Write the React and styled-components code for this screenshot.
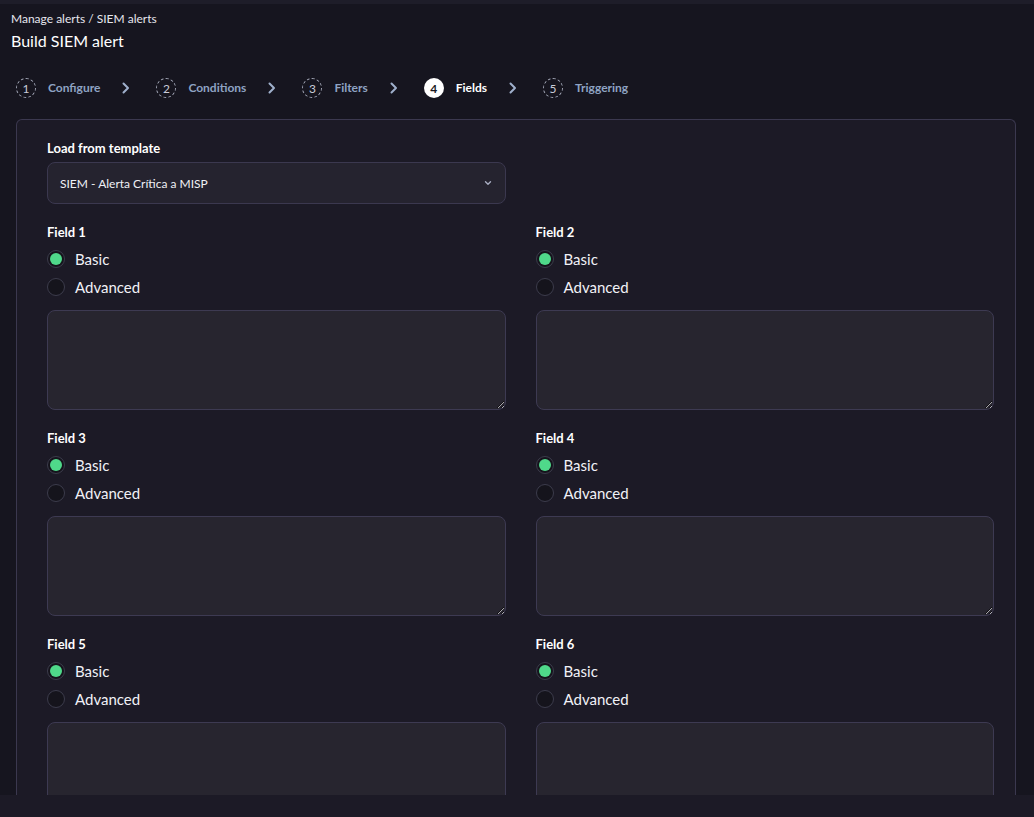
import React from "react";
import styled, { createGlobalStyle } from "styled-components";

const Global = createGlobalStyle`
  html, body { margin: 0; padding: 0; background: #16151f; }
  body { font-family: Lato, "Noto Sans", sans-serif; color: #ececf2; }
  * { box-sizing: border-box; }
`;

const Root = styled.div`
  height: 100vh;
  display: flex;
  flex-direction: column;
  overflow: hidden;
  background: #16151f;
`;

const TopStrip = styled.div`
  height: 4px;
  flex: none;
  background: #1e1d29;
`;

const Main = styled.main`
  flex: 1;
  min-height: 0;
  overflow: hidden;
  display: flex;
  flex-direction: column;
`;

const Footer = styled.footer`
  height: 22px;
  flex: none;
  background: #1c1a26;
`;

const Header = styled.header`
  padding: 7px 11px 0;
  display: flex;
  flex-direction: column;
  gap: 4px;
`;

const Crumb = styled.div`
  font-size: 12px;
  line-height: 16px;
  color: #e6e6ee;
`;

const Title = styled.h1`
  margin: 0;
  font-size: 16px;
  line-height: 20px;
  font-weight: 400;
  color: #ffffff;
`;

const Stepper = styled.nav`
  display: flex;
  align-items: center;
  padding: 0 16px;
  margin-top: 27px;
  height: 20px;
`;

const Step = styled.div`
  display: flex;
  align-items: center;
  gap: 12px;
`;

const StepCircle = styled.span`
  width: 20px;
  height: 20px;
  border-radius: 50%;
  display: inline-flex;
  align-items: center;
  justify-content: center;
  font-size: 12px;
  font-weight: ${(p) => (p.$active ? 700 : 400)};
  color: ${(p) => (p.$active ? "#1a1924" : "#c9ccd8")};
  background: ${(p) => (p.$active ? "#ffffff" : "transparent")};
  border: ${(p) => (p.$active ? "none" : "1px dashed #a7abbb")};
`;

const StepLabel = styled.span`
  font-size: 12px;
  line-height: 14px;
  margin-top: -1px;
  font-weight: 700;
  color: ${(p) => (p.$active ? "#ffffff" : "#8fa3c3")};
`;

const Chevron = styled.svg`
  width: 16px;
  height: 16px;
  margin: 0 22px 0 18px;
  flex: none;
`;

const Panel = styled.section`
  margin: 21px 18px 0 16px;
  border: 1px solid #3b384f;
  border-bottom: none;
  border-radius: 6px 6px 0 0;
  background: #1c1a26;
  padding: 20px 21px 0 30px;
  flex: 1;
`;

const Grid = styled.div`
  display: grid;
  grid-template-columns: 1fr 1fr;
  column-gap: 30px;
  row-gap: 20px;
`;

const FieldGroup = styled.div`
  display: flex;
  flex-direction: column;
`;

const Label = styled.label`
  font-size: 13px;
  line-height: 16px;
  font-weight: 700;
  color: #ffffff;
  margin-bottom: ${(p) => p.$gap || 6}px;
`;

const SelectBox = styled.div`
  height: 42px;
  border: 1px solid #3b384f;
  border-radius: 8px;
  background: #25232f;
  display: flex;
  align-items: center;
  justify-content: space-between;
  padding: 0 12px 0 12px;
  font-size: 12px;
  color: #f0f0f5;
`;

const RadioRow = styled.label`
  display: flex;
  align-items: center;
  gap: 10px;
  height: 28px;
  font-size: 15px;
  color: #f1f1f6;
`;

const RadioDot = styled.span`
  width: 18px;
  height: 18px;
  border-radius: 50%;
  border: 1px solid #3c3c4c;
  background: #15141c;
  display: inline-flex;
  align-items: center;
  justify-content: center;
  &::after {
    content: "";
    width: 12px;
    height: 12px;
    border-radius: 50%;
    background: ${(p) => (p.$checked ? "#4fd98a" : "transparent")};
  }
`;

const TextArea = styled.textarea`
  margin-top: 9px;
  height: 100px;
  width: 100%;
  resize: vertical;
  border: 1px solid #3d3a52;
  border-radius: 8px;
  background: #27252f;
  color: #f0f0f5;
  font-family: inherit;
  font-size: 13px;
  padding: 8px 10px;
  outline: none;
`;

const steps = ["Configure", "Conditions", "Filters", "Fields", "Triggering"];

function ChevronIcon() {
  return (
    <Chevron viewBox="0 0 16 16" fill="none">
      <path d="M5.5 3.5 L10 8 L5.5 12.5" stroke="#9fb0cc" strokeWidth="2" strokeLinecap="round" strokeLinejoin="round" />
    </Chevron>
  );
}

function Field({ n }) {
  return (
    <FieldGroup>
      <Label $gap={5}>Field {n}</Label>
      <RadioRow>
        <RadioDot $checked />
        Basic
      </RadioRow>
      <RadioRow>
        <RadioDot />
        Advanced
      </RadioRow>
      <TextArea />
    </FieldGroup>
  );
}

export default function App() {
  return (
    <Root>
      <Global />
      <TopStrip />
      <Main>
        <Header>
          <Crumb>Manage alerts / SIEM alerts</Crumb>
          <Title>Build SIEM alert</Title>
        </Header>
        <Stepper>
          {steps.map((s, i) => (
            <React.Fragment key={s}>
              <Step>
                <StepCircle $active={i === 3}>{i + 1}</StepCircle>
                <StepLabel $active={i === 3}>{s}</StepLabel>
              </Step>
              {i < steps.length - 1 && <ChevronIcon />}
            </React.Fragment>
          ))}
        </Stepper>
        <Panel>
          <Grid>
            <FieldGroup>
              <Label>Load from template</Label>
              <SelectBox>
                <span>SIEM - Alerta Crítica a MISP</span>
                <svg width="10" height="10" viewBox="0 0 10 10" fill="none">
                  <path d="M2.5 3.8 L5 6.3 L7.5 3.8" stroke="#a9adc2" strokeWidth="1.4" strokeLinecap="round" strokeLinejoin="round" />
                </svg>
              </SelectBox>
            </FieldGroup>
            <div />
            {[1, 2, 3, 4, 5, 6].map((n) => (
              <Field key={n} n={n} />
            ))}
          </Grid>
        </Panel>
      </Main>
      <Footer />
    </Root>
  );
}
